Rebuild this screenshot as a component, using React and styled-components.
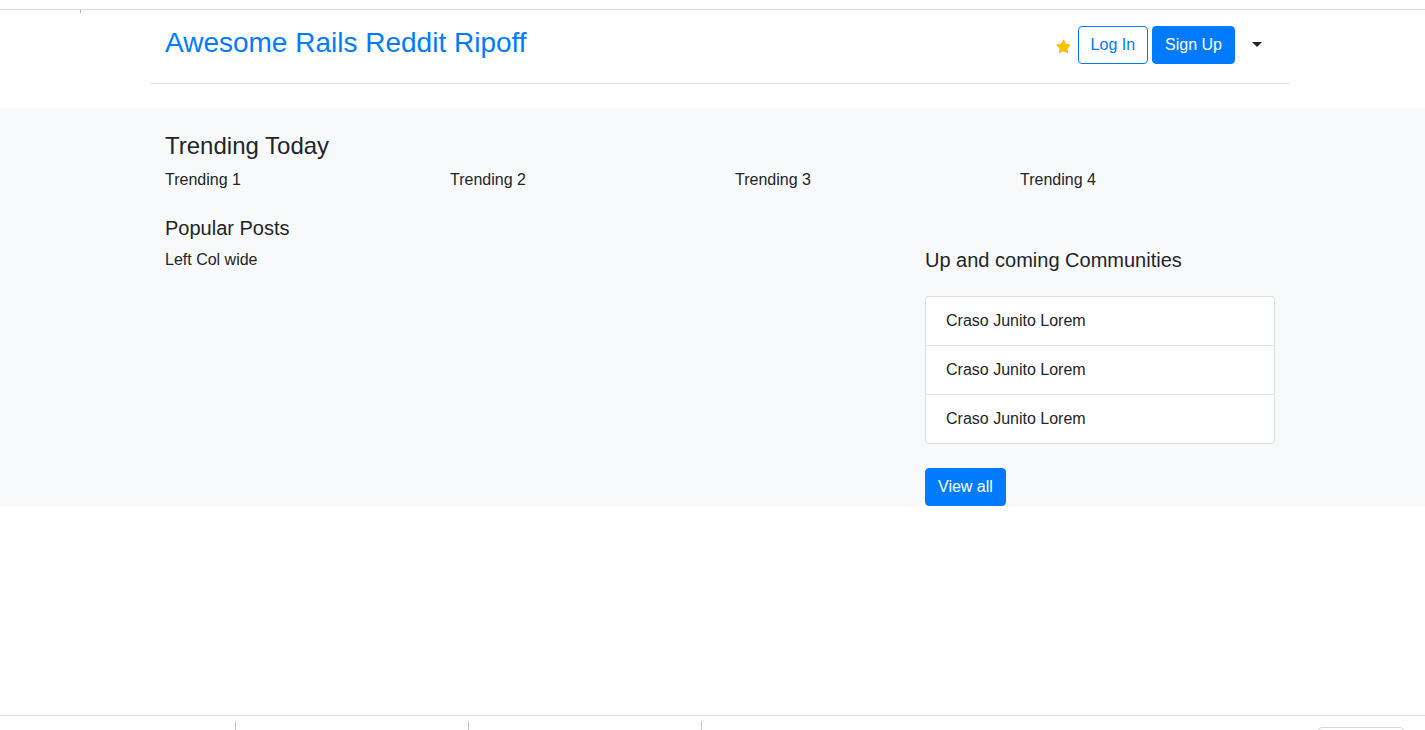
import React from 'react';
import styled, { createGlobalStyle } from 'styled-components';
import { FaStar } from 'react-icons/fa';

const GlobalStyle = createGlobalStyle`
    html, body {
        margin: 0;
        padding: 0;
        background: #fff;
    }
    body {
        font-family: "Liberation Sans", Arial, sans-serif;
        font-size: 16px;
        line-height: 1.5;
        color: #212529;
    }
    * {
        box-sizing: border-box;
    }
`;

const Page = styled.div`
    min-height: 100vh;
    display: flex;
    flex-direction: column;
`;

const TopStrip = styled.div`
    height: 10px;
    border-bottom: 1px solid #dcdcdc;
    position: relative;
`;

const TopTick = styled.span`
    position: absolute;
    left: 80px;
    top: 10px;
    width: 1px;
    height: 3px;
    background: #b5b5b5;
`;

const Container = styled.div`
    width: 1140px;
    margin-left: 150px;
    padding: 0 15px;
`;

const Header = styled.header`
    width: 1140px;
    margin: 0 0 24px 150px;
    padding: 16px 15px 19px;
    border-bottom: 1px solid #dfdfdf;
    display: flex;
    align-items: center;
    justify-content: space-between;
`;

const Brand = styled.a`
    font-size: 28px;
    line-height: 1.2;
    color: #007bff;
    text-decoration: none;
    margin-bottom: 4px;
`;

const NavRight = styled.div`
    display: flex;
    align-items: center;
`;

const Star = styled.span`
    display: flex;
    align-items: center;
    margin-right: 7px;
    padding-top: 2px;
`;

const Button = styled.button`
    font-family: inherit;
    font-size: 16px;
    line-height: 1.5;
    height: 38px;
    padding: 6px 12px;
    border-radius: 4px;
    border: 1px solid #007bff;
    background: ${p => (p.$outline ? '#fff' : '#007bff')};
    color: ${p => (p.$outline ? '#007bff' : '#fff')};
    margin-left: ${p => p.$ml || 0}px;
    cursor: pointer;
`;

const Toggle = styled.button`
    height: 38px;
    margin-left: 5px;
    padding: 0 13px 0 12px;
    border: 0;
    background: transparent;
    display: flex;
    align-items: center;
    &::after {
        content: '';
        display: block;
        border-top: 5px solid #212529;
        border-left: 5px solid transparent;
        border-right: 5px solid transparent;
        margin-top: -2px;
    }
`;

const Section = styled.section`
    background: #f8f9fa;
    padding-top: 24px;
`;

const SectionTitle = styled.h4`
    margin: 0 0 7px;
    font-size: 24px;
    font-weight: 400;
    line-height: 1.2;
`;

const TrendingRow = styled.div`
    display: grid;
    grid-template-columns: repeat(4, 1fr);
    column-gap: 30px;
    margin-bottom: 24px;
`;

const MainRow = styled.div`
    display: grid;
    grid-template-columns: 730px 350px;
    column-gap: 30px;
`;

const SubTitle = styled.h5`
    margin: ${p => p.$mt || 0}px 0 ${p => p.$mb || 8}px;
    font-size: 20px;
    font-weight: 400;
    line-height: 1.2;
`;

const Text = styled.p`
    margin: 0;
`;

const ListGroup = styled.ul`
    list-style: none;
    margin: 0 0 24px;
    padding: 0;
    background: #fff;
    border: 1px solid rgba(0, 0, 0, 0.125);
    border-radius: 4px;
`;

const ListItem = styled.li`
    padding: 12px 20px;
    & + & {
        border-top: 1px solid rgba(0, 0, 0, 0.125);
    }
`;

const Footer = styled.footer`
    margin-top: auto;
    height: 15px;
    border-top: 1px solid #dcdcdc;
    display: flex;
    align-items: flex-start;
    overflow: hidden;
`;

const FooterCell = styled.div`
    width: ${p => p.$w}px;
    height: 9px;
    margin-top: 5px;
    border-right: 1px solid #c4c4c4;
    flex-shrink: 0;
`;

const FooterBox = styled.div`
    margin-left: auto;
    margin-right: 21px;
    margin-top: 11px;
    width: 86px;
    height: 10px;
    border: 1px solid #d6d6d6;
    border-radius: 4px 4px 0 0;
`;

const trending = ['Trending 1', 'Trending 2', 'Trending 3', 'Trending 4'];
const communities = ['Craso Junito Lorem', 'Craso Junito Lorem', 'Craso Junito Lorem'];

const App = () => (
    <Page>
        <GlobalStyle />
        <TopStrip>
            <TopTick />
        </TopStrip>
        <Header>
            <Brand href="#">Awesome Rails Reddit Ripoff</Brand>
            <NavRight>
                <Star>
                    <FaStar size={15} color="#ffc107" />
                </Star>
                <Button $outline>Log In</Button>
                <Button $ml={4}>Sign Up</Button>
                <Toggle aria-label="menu" />
            </NavRight>
        </Header>
        <Section>
            <Container>
                <SectionTitle>Trending Today</SectionTitle>
                <TrendingRow>
                    {trending.map(t => (
                        <Text key={t}>{t}</Text>
                    ))}
                </TrendingRow>
                <MainRow>
                    <div>
                        <SubTitle>Popular Posts</SubTitle>
                        <Text>Left Col wide</Text>
                    </div>
                    <div>
                        <SubTitle $mt={32} $mb={24}>Up and coming Communities</SubTitle>
                        <ListGroup>
                            {communities.map((c, i) => (
                                <ListItem key={i}>{c}</ListItem>
                            ))}
                        </ListGroup>
                        <Button>View all</Button>
                    </div>
                </MainRow>
            </Container>
        </Section>
        <Footer>
            <FooterCell $w={236} />
            <FooterCell $w={233} />
            <FooterCell $w={233} />
            <FooterBox />
        </Footer>
    </Page>
);

export default App;
